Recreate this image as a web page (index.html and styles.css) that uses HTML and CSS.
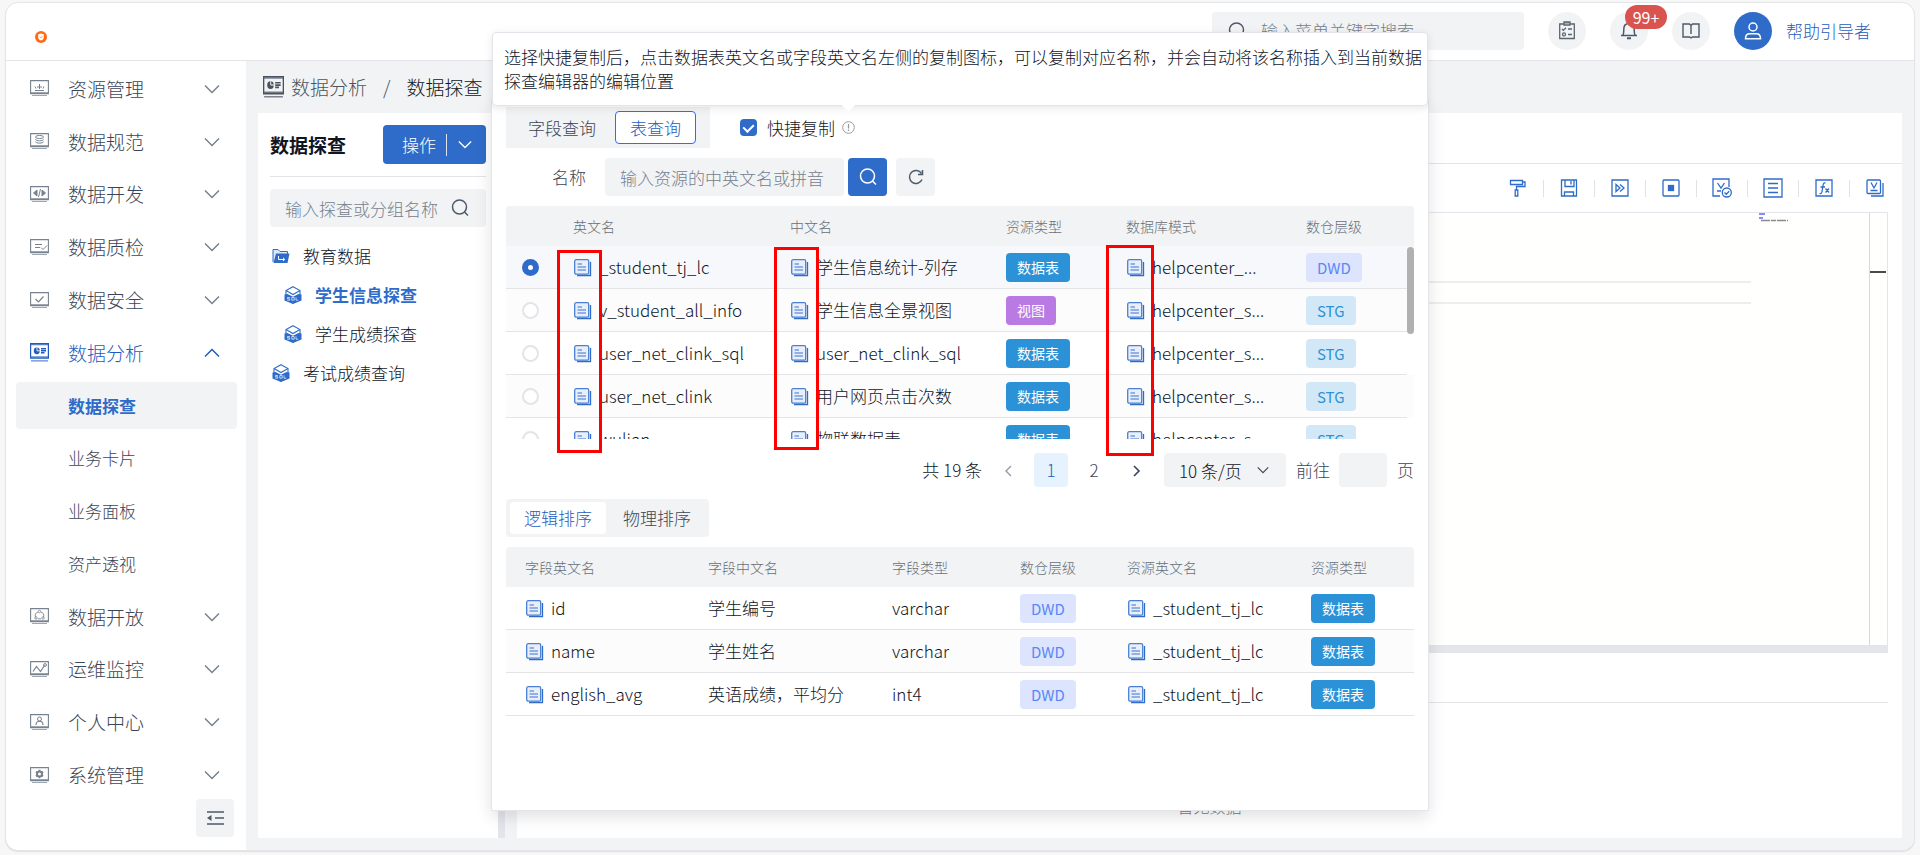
FILE: index.html
```html
<!DOCTYPE html>
<html lang="zh-CN">
<head>
  <meta charset="UTF-8">
  <meta name="viewport" content="width=device-width, initial-scale=1.0">
  <title>数据探查</title>
  <link rel="stylesheet" href="styles.css">
</head>
<body>
  <!-- Shared icons -->
  <svg class="sprite" aria-hidden="true">
    <symbol id="down" viewBox="0 0 16 10"><path d="M1 1.5l7 7 7-7" fill="none" stroke="currentColor" stroke-width="1.5"/></symbol>
    <symbol id="search" viewBox="0 0 18 18"><circle cx="8.5" cy="8" r="7" fill="none" stroke="currentColor" stroke-width="1.5"/><path d="M13.5 13l3.5 3.5" stroke="currentColor" stroke-width="1.5"/></symbol>
    <symbol id="screen" viewBox="0 0 19 17"><path d="M.6.6h17.8v13H.6z" fill="none" stroke="currentColor" stroke-width="1.1"/><path d="M1 12.5h17M2 15.5h15" stroke="currentColor" stroke-width="1.2" opacity=".7"/></symbol>
    <symbol id="chart" viewBox="0 0 19 17" preserveAspectRatio="none"><path d="M.6.6h17.8v13H.6z" fill="none" stroke="currentColor" stroke-width="1.2"/><path d="M1 1.5h17M1 12.5h17M1 16h17" stroke="currentColor" stroke-width="1.2" opacity=".7"/><circle cx="6.8" cy="7" r="3" fill="currentColor"/><path d="M7 7V4M7 7h3" stroke="#fff" stroke-width=".8"/><path d="M11 5.2h5M11 7h5M11 8.8h3.5" stroke="currentColor" stroke-width="1.3"/></symbol>
    <symbol id="copy" viewBox="0 0 18 18"><path d="M3 16.5h13.5V3" fill="none" stroke="#2f6bc8" stroke-width="1.3"/><rect x=".7" y=".7" width="14" height="14.5" rx="1.5" fill="#e8effa" stroke="#4a80d4" stroke-width="1.3"/><path d="M3.5 5H8M3.5 8H12M3.5 11H12" stroke="#3a72ce" stroke-width="1.2"/></symbol>
    <symbol id="cube" viewBox="0 0 18 18"><path d="M9 .7l7 3.800v8.500L9 17 2 13V4.500z" fill="#fff" stroke="#2f6bc8" stroke-width="1.100"/><path d="M2 4.500L9 8.500l7-4M9 8.500" fill="none" stroke="#2f6bc8" stroke-width="1.100"/><path d="M.5 8.500L3.500 8 9 10.800 14.500 8l3 .5v6L9 18 .5 14.500z" fill="#2f6bc8"/><path d="M5.800 11.500H3.500v1.300h2.200v1.400H3.300M7.800 11.500h2.400v2.700H7.800zM12 11.300v2.900h2.200" fill="none" stroke="#fff" stroke-width=".7"/></symbol>
  </svg>

  <div class="app">
    <header class="header">
      <svg class="logo" viewBox="0 0 12 12"><circle cx="6" cy="6" r="6" fill="#ff6a13"/><path d="M3.200 3.300L6 2.600l2.800.7v3.200C8.800 8.200 7.400 9 6 9.500 4.600 9 3.200 8.200 3.200 6.500z" fill="#fff"/><path d="M4.600 5.900l1.100 1.100L7.600 5" fill="none" stroke="#ff6a13" stroke-width=".7"/></svg>
      <div class="header-search">
        <svg class="icon18"><use href="#search"/></svg>
        <input type="text" aria-label="菜单搜索" placeholder="输入菜单关键字搜索">
      </div>
      <button class="round" aria-label="任务">
        <svg width="18" height="19" viewBox="0 0 18 19" fill="none" stroke="#5b6470" stroke-width="1.3"><path d="M1.700 3h14.600v14.500H1.700z"/><path d="M6 1h6v3.200H6z" fill="#aab0b8"/><path d="M4 8l1.400 1.400L8 6.700M10 8h4M10 13.500h4"/><circle cx="6" cy="13.400" r="1.500"/></svg>
      </button>
      <button class="round" aria-label="消息">
        <svg width="18" height="19" viewBox="0 0 18 19" fill="none" stroke="#4d5a6c" stroke-width="1.500"><path d="M1 14.500h16M2.800 14.500c1-1.500 1-3 1-6.500C3.800 4.500 6 2.500 9 2.500s5.200 2 5.200 5.500c0 3.500 0 5 1 6.500"/><path d="M7 17.300h4" stroke-width="2"/></svg>
        <span class="badge">99+</span>
      </button>
      <button class="round" aria-label="手册">
        <svg width="18" height="16" viewBox="0 0 18 16" fill="none" stroke="#4d5a6c" stroke-width="1.400"><path d="M9 2.500L7.500 1H1v13h6.500L9 15l1.500-1H17V1h-6.500zM9 2.500V11"/></svg>
      </button>
      <button class="round avatar" aria-label="用户">
        <svg width="18" height="18" viewBox="0 0 18 18" fill="none" stroke="#fff" stroke-width="1.500"><circle cx="9" cy="5" r="4"/><path d="M1.500 16.800h15c0-3.500-1.500-5-4-5h-7c-2.500 0-4 1.500-4 5z"/></svg>
      </button>
      <a class="user" href="#">帮助引导者</a>
    </header>

    <div class="body">
      <aside class="sidebar">
        <nav class="menu">
          <a href="#"><svg class="mi" viewBox="0 0 19 17"><use href="#screen"/><path d="M5 10.500h9M6 8.500l-1-2M13 8.500l1-2M8 8V6M11 8V6M9.500 9V4" fill="none" stroke="currentColor"/></svg>资源管理<svg class="arrow"><use href="#down"/></svg></a>
          <a href="#"><svg class="mi" viewBox="0 0 19 17"><use href="#screen"/><path d="M5.500 4c0-2 8-2 8 0s-8 2-8 0zM5.500 6.300c0 2 8 2 8 0M5.500 8.600c0 2 8 2 8 0" fill="none" stroke="currentColor"/></svg>数据规范<svg class="arrow"><use href="#down"/></svg></a>
          <a href="#"><svg class="mi" viewBox="0 0 19 17"><use href="#screen"/><path d="M7 4L3.500 7 7 10zM12 4l3.500 3L12 10z" fill="currentColor" stroke="currentColor"/><path d="M10.500 3l-2 8" stroke="currentColor"/></svg>数据开发<svg class="arrow"><use href="#down"/></svg></a>
          <a href="#"><svg class="mi" viewBox="0 0 19 17"><use href="#screen"/><path d="M5 5.500h7M5 8.500h5M11 8.500l2 2 4-4" fill="none" stroke="currentColor"/></svg>数据质检<svg class="arrow"><use href="#down"/></svg></a>
          <a href="#"><svg class="mi" viewBox="0 0 19 17"><use href="#screen"/><path d="M5.500 7l3 3 5-5.500" fill="none" stroke="currentColor" stroke-width="1.200"/></svg>数据安全<svg class="arrow"><use href="#down"/></svg></a>
          <a href="#" class="open"><svg class="mi"><use href="#chart"/></svg>数据分析<svg class="arrow"><use href="#down"/></svg></a>
          <a href="#" class="sub active">数据探查</a>
          <a href="#" class="sub">业务卡片</a>
          <a href="#" class="sub">业务面板</a>
          <a href="#" class="sub">资产透视</a>
          <a href="#"><svg class="mi" viewBox="0 0 19 17"><use href="#screen"/><path d="M8 4a4 4 0 0 0-2.500 5M11 4a4 4 0 0 1 2.500 5M8 10.800h3" fill="none" stroke="currentColor" stroke-width=".9"/><g fill="none" stroke="currentColor" stroke-width=".8"><circle cx="9.500" cy="3.500" r="1.200"/><circle cx="6" cy="10" r="1.200"/><circle cx="13" cy="10" r="1.200"/></g></svg>数据开放<svg class="arrow"><use href="#down"/></svg></a>
          <a href="#"><svg class="mi" viewBox="0 0 19 17"><use href="#screen"/><path d="M3 10.500l3.500-5 4 5 4-6" fill="none" stroke="currentColor" stroke-width="1.200"/><circle cx="15" cy="4" r="1.400" fill="none" stroke="currentColor"/></svg>运维监控<svg class="arrow"><use href="#down"/></svg></a>
          <a href="#"><svg class="mi" viewBox="0 0 19 17"><use href="#screen"/><circle cx="9.500" cy="5" r="2" fill="none" stroke="currentColor"/><path d="M6 11c0-5 7-5 7 0" fill="none" stroke="currentColor" stroke-width="1.200"/></svg>个人中心<svg class="arrow"><use href="#down"/></svg></a>
          <a href="#"><svg class="mi" viewBox="0 0 19 17"><use href="#screen"/><circle cx="9.500" cy="7" r="2.500" fill="none" stroke="currentColor" stroke-width="2"/><path d="M9.500 2.800v8.400M5.900 4.900l7.200 4.200M5.900 9.100l7.200-4.200" stroke="currentColor" stroke-width="1.800"/><circle cx="9.500" cy="7" r="1.500" fill="#fff"/></svg>系统管理<svg class="arrow"><use href="#down"/></svg></a>
        </nav>
        <button class="collapse" aria-label="收起菜单">
          <svg width="17" height="14" viewBox="0 0 17 14"><path d="M0 1h17M8 7h9M0 13h17" stroke="#4d5a6c" stroke-width="1.500"/><path d="M0 7l4.500-3v6z" fill="#4d5a6c"/></svg>
        </button>
      </aside>

      <main class="main">
        <div class="breadcrumb">
          <svg class="crumb-icon"><use href="#chart"/></svg>
          <a href="#">数据分析</a><span class="slash">/</span><span class="current">数据探查</span>
        </div>
        <div class="panels">
          <section class="tree-panel">
            <div class="tree-head">
              <h2>数据探查</h2>
              <div class="split-btn">
                <button>操作</button>
                <button class="more" aria-label="更多操作"><svg class="arrow"><use href="#down"/></svg></button>
              </div>
            </div>
            <div class="tree-search">
              <input type="text" aria-label="搜索探查" placeholder="输入探查或分组名称">
              <svg class="icon18"><use href="#search"/></svg>
            </div>
            <ul class="tree">
              <li><svg class="ti" viewBox="0 0 18 18"><path d="M1 15V2.500h5l2 2h7.500V7" fill="#dce7f8" stroke="#2f6bc8"/><path d="M4 6.500h13.500L15.500 16H1.500z" fill="#2f6bc8"/><path d="M6.500 9v3.500h6M11 10.800l1.800 1.700-1.800 1.600" fill="none" stroke="#fff"/></svg>教育数据</li>
              <li class="child selected"><svg class="ti"><use href="#cube"/></svg>学生信息探查</li>
              <li class="child"><svg class="ti"><use href="#cube"/></svg>学生成绩探查</li>
              <li><svg class="ti"><use href="#cube"/></svg>考试成绩查询</li>
            </ul>
          </section>
          <div class="splitter"></div>
          <section class="work">
            <div class="work-tabs"></div>
            <div class="toolbar">
              <button aria-label="格式化"><svg width="18" height="18" viewBox="0 0 18 18"><path d="M1.500 1.500h12v4h-12zM13.500 3H16v4.500H7.500V11M6.200 11h2.600v6H6.200z"/></svg></button>
              <button aria-label="保存"><svg width="18" height="18" viewBox="0 0 18 18"><path d="M1.500 1h15v16h-15zM5 1v6.500h9V1M11 2v3.500M4.500 17v-4h9v4"/></svg></button>
              <button aria-label="运行"><svg width="18" height="18" viewBox="0 0 18 18"><path d="M1 1h16v16H1zM5 5.500v7L9 9zM9 5.500L13 9l-4 3.500M5 5.500L9 9"/></svg></button>
              <button aria-label="停止"><svg width="18" height="18" viewBox="0 0 18 18"><rect x="1" y="1" width="16" height="16" rx="1"/><rect x="6.500" y="6.500" width="5" height="5" fill="#2f6bc8"/></svg></button>
              <button aria-label="校验"><svg width="20" height="20" viewBox="0 0 20 20"><path d="M8 18H1V1h16v8M5.500 5l3.500 5 3.500-5M5 13h4"/><circle cx="14.800" cy="14.500" r="4.500"/><path d="M12.500 14.500l1.800 1.800 2.800-3"/></svg></button>
              <button aria-label="列表"><svg width="20" height="20" viewBox="0 0 20 20"><path d="M1 1h18v18H1zM5 5.500h10M5 10h10M5 14.500h10"/></svg></button>
              <button aria-label="函数"><svg width="18" height="18" viewBox="0 0 18 18"><path d="M1 1h16v16H1zM10.500 4C8.500 3.500 8.200 5 8 6.500l-1 6c-.3 1.800-1 2.500-2.500 2M5.500 8h4.500M10.500 9.500l3.500 4M14 9.500l-3.500 4"/></svg></button>
              <button aria-label="变量"><svg width="18" height="18" viewBox="0 0 18 18"><rect x="1" y="1" width="13.500" height="13.500" rx="1"/><path d="M5 17h12V4M5 3.500l3 5.500 3-5.500M4.500 11.500h7"/></svg></button>
            </div>
            <div class="editor">
              <div class="code"><div class="code-line"></div></div>
              <div class="minimap"><svg width="32" height="9" viewBox="0 0 32 9"><path d="M0 1h6M0 5h4" stroke="#8b8bfa" stroke-width="2"/><path d="M2 7.500h27" stroke="#8a8a8a" stroke-width="1.500" stroke-dasharray="9 1 5 1"/></svg></div>
              <div class="ruler"></div>
            </div>
            <div class="result-head"></div>
            <div class="empty">暂无数据</div>
          </section>
        </div>
      </main>
    </div>
  </div>

  <div class="popover">
    <div class="query-row">
      <div class="query-tabs">
        <button>字段查询</button>
        <button class="on">表查询</button>
      </div>
      <input type="checkbox" id="quick" checked>
      <label for="quick">快捷复制</label>
      <svg class="info" viewBox="0 0 13 13" fill="none" stroke="#949aa3"><circle cx="6.500" cy="6.500" r="5.800"/><path d="M6.500 3v4.500M6.500 8.500V10" stroke-width="1.300"/></svg>
    </div>

    <form class="search-row">
      <label for="name">名称</label>
      <input type="text" id="name" placeholder="输入资源的中英文名或拼音">
      <button type="button" class="go" aria-label="搜索"><svg class="icon18"><use href="#search"/></svg></button>
      <button type="button" class="reset" aria-label="刷新"><svg width="16" height="16" viewBox="0 0 16 16" fill="none" stroke="#4d5a6c" stroke-width="1.500"><path d="M14 10.500A6.500 6.500 0 1 1 13.500 4.500"/><path d="M14.500 1v4.500H10"/></svg></button>
    </form>

    <div class="table-box">
      <table class="res-table">
        <colgroup><col class="w51"><col class="w217"><col class="w216"><col class="w120"><col class="w180"><col><col class="w7"></colgroup>
        <thead>
          <tr><th></th><th>英文名</th><th>中文名</th><th>资源类型</th><th>数据库模式</th><th>数仓层级</th><th></th></tr>
        </thead>
        <tbody>
          <tr class="picked">
            <td><input type="radio" name="res" aria-label="_student_tj_lc" checked></td>
            <td><svg class="copy"><use href="#copy"/></svg>_student_tj_lc</td>
            <td><svg class="copy"><use href="#copy"/></svg>学生信息统计-列存</td>
            <td><span class="tag table">数据表</span></td>
            <td><svg class="copy"><use href="#copy"/></svg>helpcenter_...</td>
            <td><span class="tag dwd">DWD</span></td><td></td>
          </tr>
          <tr>
            <td><input type="radio" name="res" aria-label="v_student_all_info"></td>
            <td><svg class="copy"><use href="#copy"/></svg>v_student_all_info</td>
            <td><svg class="copy"><use href="#copy"/></svg>学生信息全景视图</td>
            <td><span class="tag view">视图</span></td>
            <td><svg class="copy"><use href="#copy"/></svg>helpcenter_s...</td>
            <td><span class="tag stg">STG</span></td><td></td>
          </tr>
          <tr>
            <td><input type="radio" name="res" aria-label="user_net_clink_sql"></td>
            <td><svg class="copy"><use href="#copy"/></svg>user_net_clink_sql</td>
            <td><svg class="copy"><use href="#copy"/></svg>user_net_clink_sql</td>
            <td><span class="tag table">数据表</span></td>
            <td><svg class="copy"><use href="#copy"/></svg>helpcenter_s...</td>
            <td><span class="tag stg">STG</span></td><td></td>
          </tr>
          <tr>
            <td><input type="radio" name="res" aria-label="user_net_clink"></td>
            <td><svg class="copy"><use href="#copy"/></svg>user_net_clink</td>
            <td><svg class="copy"><use href="#copy"/></svg>用户网页点击次数</td>
            <td><span class="tag table">数据表</span></td>
            <td><svg class="copy"><use href="#copy"/></svg>helpcenter_s...</td>
            <td><span class="tag stg">STG</span></td><td></td>
          </tr>
          <tr>
            <td><input type="radio" name="res" aria-label="wulian"></td>
            <td><svg class="copy"><use href="#copy"/></svg>wulian</td>
            <td><svg class="copy"><use href="#copy"/></svg>物联数据表</td>
            <td><span class="tag table">数据表</span></td>
            <td><svg class="copy"><use href="#copy"/></svg>helpcenter_s...</td>
            <td><span class="tag stg">STG</span></td><td></td>
          </tr>
        </tbody>
      </table>
      <div class="thumb"></div>
    </div>

    <div class="pager">
      <span class="total">共 19 条</span>
      <button class="prev" aria-label="上一页"><svg width="8" height="12" viewBox="0 0 8 12"><path d="M7 1L2 6l5 5" fill="none" stroke="currentColor" stroke-width="1.400"/></svg></button>
      <button class="page on">1</button>
      <button class="page">2</button>
      <button class="next" aria-label="下一页"><svg width="8" height="12" viewBox="0 0 8 12"><path d="M1 1l5 5-5 5" fill="none" stroke="currentColor" stroke-width="1.600"/></svg></button>
      <div class="size">
        <select aria-label="每页条数"><option>10 条/页</option></select>
        <svg class="arrow"><use href="#down"/></svg>
      </div>
      <label for="jump">前往</label>
      <input type="text" id="jump">
      <span>页</span>
    </div>

    <div class="sort-tabs">
      <button class="on">逻辑排序</button>
      <button>物理排序</button>
    </div>

    <table class="field-table">
      <colgroup><col class="w186"><col class="w184"><col class="w128"><col class="w107"><col class="w184"><col></colgroup>
      <thead>
        <tr><th>字段英文名</th><th>字段中文名</th><th>字段类型</th><th>数仓层级</th><th>资源英文名</th><th>资源类型</th></tr>
      </thead>
      <tbody>
        <tr>
          <td><svg class="copy"><use href="#copy"/></svg>id</td><td>学生编号</td><td>varchar</td>
          <td><span class="tag dwd">DWD</span></td>
          <td><svg class="copy"><use href="#copy"/></svg>_student_tj_lc</td>
          <td><span class="tag table">数据表</span></td>
        </tr>
        <tr>
          <td><svg class="copy"><use href="#copy"/></svg>name</td><td>学生姓名</td><td>varchar</td>
          <td><span class="tag dwd">DWD</span></td>
          <td><svg class="copy"><use href="#copy"/></svg>_student_tj_lc</td>
          <td><span class="tag table">数据表</span></td>
        </tr>
        <tr>
          <td><svg class="copy"><use href="#copy"/></svg>english_avg</td><td>英语成绩，平均分</td><td>int4</td>
          <td><span class="tag dwd">DWD</span></td>
          <td><svg class="copy"><use href="#copy"/></svg>_student_tj_lc</td>
          <td><span class="tag table">数据表</span></td>
        </tr>
      </tbody>
    </table>

    <!-- Highlight boxes around the copy icons -->
    <div class="mark mark-en"></div>
    <div class="mark mark-cn"></div>
    <div class="mark mark-db"></div>
  </div>

  <div class="tooltip" role="tooltip">选择快捷复制后，点击数据表英文名或字段英文名左侧的复制图标，可以复制对应名称，并会自动将该名称插入到当前数据<br>探查编辑器的编辑位置</div>
</body>
</html>
```

FILE: styles.css
```css
* {
  box-sizing: border-box;
  font-family: "Noto Sans CJK SC", "Open Sans", sans-serif;
}

body {
  margin: 0;
  padding: 2px 5px 4px;
  height: 100vh;
  background: #f7f7f7;
  color: #10151f;
  font-size: 17px;
  font-weight: 300;
  line-height: 24px;
}

button {
  border: none;
  padding: 0;
  background: none;
  color: inherit;
  font-size: 17px;
  font-weight: 300;
  line-height: 24px;
  cursor: pointer;
}

input,
select {
  border: none;
  outline: none;
  background: none;
  min-width: 0;
  color: inherit;
  font-size: 17px;
  font-weight: 300;
}

input::placeholder {
  color: #76808d;
  opacity: 1;
}

a {
  color: inherit;
  text-decoration: none;
}

.sprite {
  display: none;
}

.icon18 {
  width: 18px;
  height: 18px;
  color: #4d5a6c;
  flex: none;
}

.arrow {
  width: 16px;
  height: 10px;
  flex: none;
}

.app {
  display: flex;
  flex-direction: column;
  height: 100%;
  background: #fff;
  border: 1px solid #e4e5e8;
  border-radius: 13px;
  box-shadow: 0 1px 1px #e0e0e0;
  overflow: hidden;
}

/* Header */
.header {
  display: flex;
  align-items: center;
  height: 58px;
  flex: none;
  padding: 0 43px 2px 29px;
  border-bottom: 1px solid #e2e4e8;
}

.logo {
  width: 12px;
  height: 12px;
  margin: 12px auto 0 0;
}

.header-search {
  display: flex;
  align-items: center;
  width: 312px;
  height: 38px;
  padding-left: 16px;
  background: #f1f3f5;
  border-radius: 4px;
}

.header-search input {
  flex: 1;
  margin-left: 13px;
}

.round {
  position: relative;
  display: flex;
  align-items: center;
  justify-content: center;
  width: 38px;
  height: 38px;
  margin-left: 24px;
  background: #f1f3f5;
  border-radius: 50%;
}

.badge {
  position: absolute;
  left: 15px;
  top: -7px;
  width: 42px;
  height: 24px;
  border-radius: 12px;
  background: #d9534f;
  color: #fff;
  font-size: 16px;
  font-weight: 400;
}

.avatar {
  background: #2f6bc8;
}

.user {
  margin-left: 14px;
  color: #1f5cbd;
}

/* Sidebar */
.body {
  display: flex;
  flex: 1;
  min-height: 0;
}

.sidebar {
  display: flex;
  flex-direction: column;
  width: 240px;
  flex: none;
  padding: 4px 9px 13px 10px;
}

.menu {
  display: flex;
  flex-direction: column;
  flex: 1;
  gap: 5px;
  min-height: 0;
}

.menu a {
  display: flex;
  align-items: center;
  flex: 1;
  max-height: 48px;
  padding: 0 17px 0 14px;
  border-radius: 4px;
  color: #3a4657;
  font-size: 19px;
}

.mi {
  width: 19px;
  height: 17px;
  margin-right: 19px;
  color: #76828f;
}

.open .mi {
  height: 19px;
}

.menu .arrow {
  margin-left: auto;
  color: #76828f;
}

.menu .open,
.menu .open svg {
  color: #1f5cbd;
}

.open .arrow {
  transform: rotate(180deg);
}

.menu .sub {
  padding-left: 52px;
  font-size: 17px;
}

.menu .active {
  background: #f1f3f5;
  color: #2f6bc8;
  font-weight: 700;
}

.collapse {
  display: flex;
  align-items: center;
  justify-content: center;
  align-self: flex-end;
  width: 38px;
  height: 38px;
  margin-right: 3px;
  flex: none;
  background: #f1f3f5;
  border-radius: 4px;
}

/* Main */
.main {
  display: flex;
  flex-direction: column;
  flex: 1;
  min-width: 0;
  padding: 0 12px 12px;
  background: #f1f3f5;
}

.breadcrumb {
  display: flex;
  align-items: center;
  height: 52px;
  flex: none;
  padding-left: 5px;
  color: #4a5360;
  font-size: 19px;
}

.crumb-icon {
  width: 21px;
  height: 22px;
  margin-right: 7px;
}

.slash {
  margin: 0 16px;
}

.current {
  color: #10151f;
}

.panels {
  display: flex;
  flex: 1;
  min-height: 0;
}

.tree-panel {
  width: 240px;
  flex: none;
  padding: 12px;
  background: #fff;
}

.tree-head {
  display: flex;
  justify-content: space-between;
  align-items: center;
  padding-bottom: 12px;
  border-bottom: 1px solid #e2e4e8;
}

.tree-head h2 {
  margin: 0;
  font-size: 19px;
  font-weight: 700;
}

.split-btn {
  display: flex;
  align-items: center;
  height: 39px;
  padding: 0 14px 0 19px;
  background: #2f6bc8;
  border-radius: 4px;
  color: #fff;
}

.split-btn .more {
  display: flex;
  align-items: center;
  height: 22px;
  margin-left: 10px;
  padding-left: 11px;
  border-left: 1px solid #dce3ee;
}

.more .arrow {
  width: 14px;
  height: 9px;
}

.tree-search {
  display: flex;
  align-items: center;
  height: 38px;
  margin: 12px 0 9px;
  padding: 0 17px 0 13px;
  background: #f1f3f5;
  border-radius: 4px;
}

.tree-search input {
  flex: 1;
  padding: 0 2px;
}

.tree {
  display: flex;
  flex-direction: column;
  margin: 0;
  padding: 0;
  list-style: none;
}

.tree li {
  display: flex;
  align-items: center;
  height: 39px;
  padding-left: 2px;
}

.tree .child {
  padding-left: 14px;
}

.tree .selected {
  color: #2f6bc8;
  font-weight: 700;
}

.ti {
  width: 18px;
  height: 18px;
  margin-right: 13px;
}

.splitter {
  width: 7px;
  flex: none;
  margin-right: 12px;
  background: #e4e5eb;
}

/* Editor area */
.work {
  display: flex;
  flex-direction: column;
  flex: 1;
  min-width: 0;
  background: #fff;
}

.work-tabs {
  height: 51px;
  border-bottom: 1px solid #e2e4e8;
}

.toolbar {
  display: flex;
  align-items: center;
  justify-content: flex-end;
  height: 48px;
  padding-right: 2px;
}

.toolbar button {
  display: flex;
  align-items: center;
  justify-content: center;
  width: 51px;
  height: 17px;
  border-left: 1px solid #dfe2e7;
}

.toolbar button:first-child {
  border-left: none;
}

.toolbar svg {
  flex: none;
  fill: none;
  stroke: #2f6bc8;
  stroke-width: 1.3;
}

.editor {
  display: flex;
  height: 441px;
  margin: 0 14px;
  background: #fffffd;
  border: 1px solid #e4e5eb;
  border-bottom: 8px solid #e4e5eb;
}

.code {
  flex: 1;
  padding-top: 68px;
}

.code-line {
  height: 23px;
  border: solid #eee;
  border-width: 2px 0;
}

.minimap {
  display: flex;
  width: 118px;
  padding-left: 8px;
}

.ruler {
  width: 18px;
  border-left: 1px solid #d8d9da;
  background: linear-gradient(#4a4a4a, #4a4a4a) 0 58px / 16px 2px no-repeat;
}

.result-head {
  height: 50px;
  margin: 0 14px;
  border-bottom: 1px solid #e2e4e8;
}

.empty {
  margin-top: auto;
  padding-bottom: 20px;
  text-align: center;
  color: #76808d;
  font-size: 16px;
}

/* Popover */
.popover {
  position: absolute;
  left: 491px;
  top: 100px;
  width: 938px;
  height: 711px;
  padding: 6px 14px;
  background: #fff;
  border: 1px solid #e4e5eb;
  box-shadow: 0 6px 16px rgba(0, 0, 0, 0.12);
}

.query-row {
  display: flex;
  align-items: center;
  height: 41px;
}

.query-tabs {
  display: flex;
  align-items: center;
  gap: 5px;
  height: 41px;
  padding: 0 14px 0 8px;
  background: #f1f3f5;
  color: #3a4657;
}

.query-tabs button {
  height: 33px;
  padding: 0 14px;
}

.query-tabs .on {
  padding: 0 14px;
  background: #fff;
  border: 1px solid #2f6bff;
  border-radius: 4px;
  color: #1f5cbd;
}

.query-row input {
  appearance: none;
  width: 17px;
  height: 17px;
  margin: 0 10px 0 30px;
  background: #2f6bc8;
  border-radius: 4px;
  display: grid;
  place-items: center;
}

.query-row input::after {
  content: "";
  width: 5px;
  height: 8px;
  margin-bottom: 2px;
  border: solid #fff;
  border-width: 0 2px 2px 0;
  transform: rotate(45deg);
}

.info {
  width: 13px;
  height: 13px;
  margin-left: 7px;
}

.search-row {
  display: flex;
  align-items: center;
  height: 38px;
  margin: 10px 0;
  padding-left: 46px;
  color: #3a4657;
}

.search-row input {
  width: 239px;
  height: 38px;
  margin: 0 4px 0 19px;
  padding: 0 15px;
  background: #f1f3f5;
  border-radius: 4px;
}

.search-row button {
  display: flex;
  align-items: center;
  justify-content: center;
  width: 39px;
  height: 38px;
  border-radius: 4px;
}

.go {
  background: #2f6bc8;
}

.go svg {
  color: #fff;
}

.reset {
  margin-left: 9px;
  background: #f1f3f5;
}

.table-box {
  position: relative;
  height: 233px;
  overflow: hidden;
}

table {
  width: 100%;
  table-layout: fixed;
  border-collapse: separate;
  border-spacing: 0;
}

th {
  height: 40px;
  padding: 0 0 0 16px;
  background: #f1f3f5;
  color: #6a6f77;
  font-size: 14px;
  font-weight: 300;
  text-align: left;
}

th:first-child {
  border-radius: 4px 0 0 0;
}

th:last-child {
  border-radius: 0 4px 0 0;
}

td {
  height: 43px;
  padding: 0 0 0 16px;
  border-bottom: 1px solid #e2e4e8;
  white-space: nowrap;
}

tr:nth-child(even) td {
  background: #fcfcfc;
}

.picked td {
  background: #f7f8fb;
}

.res-table th:last-child,
.res-table td:last-child {
  padding: 0;
}

.res-table td:last-child {
  border: none;
}

.field-table th:first-child,
.field-table td:first-child {
  padding-left: 19px;
}

.w7 { width: 7px; }
.w51 { width: 51px; }
.w107 { width: 107px; }
.w120 { width: 120px; }
.w128 { width: 128px; }
.w180 { width: 180px; }
.w184 { width: 184px; }
.w186 { width: 186px; }
.w216 { width: 216px; }
.w217 { width: 217px; }

.copy {
  width: 18px;
  height: 18px;
  margin: 0 7px 0 1px;
  vertical-align: -3px;
}

td input {
  appearance: none;
  display: block;
  width: 17px;
  height: 17px;
  margin: 0;
  border: 2px solid #e2e4e8;
  border-radius: 50%;
  background: #fff;
}

td input:checked {
  border: 6px solid #2f6bc8;
}

.tag {
  display: inline-block;
  height: 29px;
  padding: 0 11px;
  border-radius: 4px;
  font-size: 14px;
  font-weight: 400;
  line-height: 29px;
  vertical-align: middle;
}

.tag.table {
  background: #2b92d7;
  color: #fff;
}

.tag.view {
  background: #b97ae3;
  color: #fff;
}

.tag.dwd {
  background: #dce5fd;
  color: #5b86f7;
  font-size: 15px;
}

.tag.stg {
  background: #d3e8f6;
  color: #2b92d7;
  font-size: 15px;
}

.thumb {
  position: absolute;
  right: 0;
  top: 41px;
  width: 7px;
  height: 87px;
  border-radius: 4px;
  background: #b1b1b1;
}

/* Pager */
.pager {
  display: flex;
  align-items: center;
  justify-content: flex-end;
  height: 34px;
  margin: 14px 0 12px;
  color: #3a4657;
}

.total {
  color: #10151f;
}

.pager button {
  height: 34px;
}

.prev {
  width: 20px;
  margin: 0 16px;
  color: #949aa3;
}

.page {
  width: 34px;
  margin-right: 9px;
  border-radius: 4px;
}

.page.on {
  background: #e6f3fe;
  color: #1f5cbd;
}

.next {
  width: 20px;
  margin: 0 17px 0 7px;
}

.size {
  display: flex;
  align-items: center;
  width: 122px;
  height: 34px;
  padding: 0 17px 0 15px;
  margin-right: 10px;
  background: #f1f3f5;
  border-radius: 4px;
}

.size select {
  appearance: none;
  flex: 1;
  padding: 0;
  color: #10151f;
}

.size .arrow {
  width: 12px;
  height: 8px;
}

.pager input {
  width: 48px;
  height: 34px;
  margin: 0 10px 0 9px;
  background: #f1f3f5;
  border-radius: 4px;
}

.sort-tabs {
  display: inline-flex;
  align-items: center;
  gap: 2px;
  height: 38px;
  margin-bottom: 10px;
  padding: 0 3px 0 4px;
  vertical-align: top;
  background: #f1f3f5;
  border-radius: 4px;
  color: #3a4657;
}

.sort-tabs button {
  height: 32px;
  padding: 0 15px;
}

.sort-tabs .on {
  padding: 0 14px;
  border-radius: 4px;
  background: #fff;
  color: #1f5cbd;
}

.mark {
  position: absolute;
  border: 3px solid #f00;
}

.mark-en {
  left: 65px;
  top: 149px;
  width: 45px;
  height: 203px;
}

.mark-cn {
  left: 282px;
  top: 146px;
  width: 45px;
  height: 203px;
}

.mark-db {
  left: 614px;
  top: 144px;
  width: 48px;
  height: 211px;
}

.tooltip {
  position: absolute;
  left: 492px;
  top: 32px;
  width: 936px;
  height: 74px;
  padding: 12px 2px 12px 11px;
  background: #fff;
  border: 1px solid #e2e4ea;
  border-radius: 4px;
  box-shadow: 0 2px 8px rgba(0, 0, 0, 0.1);
  white-space: nowrap;
}

.tooltip::after {
  content: "";
  position: absolute;
  left: 351px;
  bottom: -5px;
  width: 9px;
  height: 9px;
  background: #fff;
  transform: rotate(45deg);
}
```
